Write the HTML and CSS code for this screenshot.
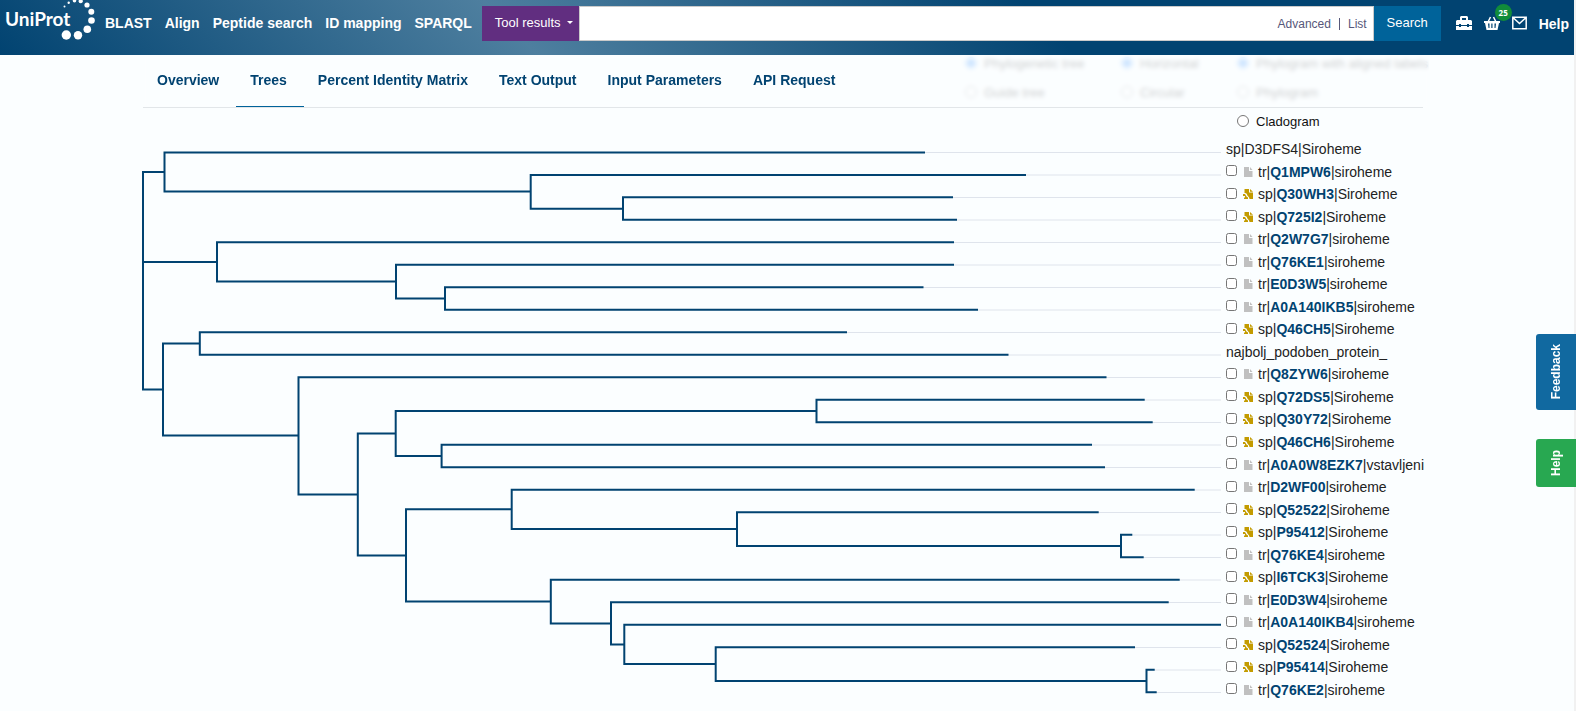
FILE: index.html
```html
<!DOCTYPE html>
<html lang="en">
<head>
<meta charset="utf-8">
<title>Align results | UniProt</title>
<link rel="stylesheet" href="styles.css">
</head>
<body>
<svg class="sprite" aria-hidden="true">
  <symbol id="tr" viewBox="0 0 10 10"><path fill="#c0c0c0" d="M1 0h5v4h3.500v6H1z"/><path fill="#c0c0c0" d="M7 0l2.500 3H7z"/></symbol>
  <symbol id="sp" viewBox="0 0 10 10"><path fill="#c39b00" d="M1.500 0H6v3.500h4V10H6.500C6.500 7.500 4 7 4 5.500 4 4.500 2.500 4 1.500 4z"/><path fill="#c39b00" d="M7 0l3 2.700H7z"/><path fill="#c39b00" d="M0 5h2l1.500 2.500 1.500 1V10H1V8.500h1V7H0z"/></symbol>
</svg>

<header class="header">
  <a class="logo" href="#" aria-label="UniProt home">
    <span class="logo-text">UniProt</span>
    <svg class="logo-dots" width="36" height="42" viewBox="60 0 36 42" fill="#fff" aria-hidden="true"><circle cx="66.300" cy="35" r="4.700"/><circle cx="78" cy="35.300" r="4.200"/><circle cx="87.300" cy="29.200" r="3.800"/><circle cx="91.500" cy="20.500" r="3.300"/><circle cx="91.300" cy="11.800" r="3"/><circle cx="87" cy="5" r="2.600"/><circle cx="80.700" cy="1.200" r="2.100"/><circle cx="74.500" cy=".8" r="1.800"/><circle cx="68.700" cy="2.800" r="1.200"/><circle cx="64.500" cy="6.500" r="1"/></svg>
  </a>
  <nav class="nav">
    <a href="#">BLAST</a><a href="#">Align</a><a href="#">Peptide search</a><a href="#">ID mapping</a><a href="#">SPARQL</a>
  </nav>
  <form class="search">
    <button type="button" class="namespace">Tool results<span class="caret"></span></button>
    <div class="field">
      <input type="text" aria-label="Search UniProt">
      <a href="#">Advanced</a><span class="bar"></span><a href="#">List</a>
    </div>
    <button type="submit" class="submit">Search</button>
  </form>
  <nav class="tools">
    <a href="#" aria-label="Tool results"><svg width="16" height="14" viewBox="0 0 16 14"><path fill="#fff" d="M5 0h6l1 1v3h3l1 1v4h-3V8h-2v1H5V8H3v1H0V5l1-1h3V1zM6 2v2h4V2zM0 10h3v1h2v-1h6v1h2v-1h3v4H0z"/></svg></a>
    <a class="basket" href="#" aria-label="Basket"><svg width="16" height="14" viewBox="0 0 16 14"><path d="M4 6l2.500-5M12 6L9.500 1" stroke="#fff" stroke-width="1.500"/><path fill="#fff" fill-rule="evenodd" d="M0 5h16v2h-1l-1.500 7h-11L1 7H0zM4 7.500l.5 4.500h1V7.500zM7.300 7.500V12h1.200V7.500zM10.500 7.500V12h1l.5-4.500z"/></svg><span class="badge">25</span></a>
    <a href="#" aria-label="Contact"><svg width="15" height="14" viewBox="0 0 15 14"><path fill="none" stroke="#fff" stroke-width="1.500" d="M.8 1.300h13.400v11.400H.8zM1.500 2l6 5.500 6-5.500"/></svg></a>
    <a class="help" href="#">Help</a>
  </nav>
</header>

<nav class="tabs">
  <div class="tab-row">
    <a href="#">Overview</a><a class="active" href="#">Trees</a><a href="#">Percent Identity Matrix</a><a href="#">Text Output</a><a href="#">Input Parameters</a><a href="#">API Request</a>
  </div>
</nav>

<main class="main">
  <div class="options">
    <fieldset><label><input type="radio" name="type" checked>Phylogenetic tree</label><label><input type="radio" name="type">Guide tree</label></fieldset>
    <fieldset><label><input type="radio" name="layout" checked>Horizontal</label><label><input type="radio" name="layout">Circular</label></fieldset>
    <fieldset><label><input type="radio" name="branch" checked>Phylogram with aligned labels</label><label><input type="radio" name="branch">Phylogram</label><label><input type="radio" name="branch">Cladogram</label></fieldset>
  </div>

  <div class="phylo">
    <svg class="tree" viewBox="142 138 1079 563" preserveAspectRatio="none" role="img" aria-label="Phylogenetic tree">
      <path class="guide" d="M924 152.500H1221M1025 175H1221M952 197.500H1221M956 220H1221M953 242.500H1221M953 265H1221M922 287.500H1221M977 310H1221M846 332.500H1221M1007 355H1221M1105 377.500H1221M1144 400H1221M1152 422.500H1221M1091 445H1221M1104 467.500H1221M1194 490H1221M1098 512.500H1221M1131 535H1221M1143 557.500H1221M1179 580H1221M1168 602.500H1221M1134 647.500H1221M1154 670H1221M1156 692.500H1221"/>
      <path class="branch" d="M164.500 172H143V389.500H163M143 262H217
        M924 152.500H164.500V191.500H530.700M1025 175H530.700V208.700H623M952 197.300H623V219.800H956
        M953 242.300H217V281.600H396M953 264.800H396V298.600H445M922.500 287.300H445V309.800H977
        M199.800 343.500H163V435.600H298.500M846 332.300H199.800V354.800H1007.500
        M1105.500 377.300H298.500V494.500H357.800M395.700 433.500H357.800V555.500H406
        M816.500 411H395.700V456H441.600M1143.700 399.800H816.500V422.300H1151.700M1091 444.800H441.600V467.300H1104
        M511.700 509.300H406V601.600H550.800M1193.700 489.800H511.700V529H737M1097.700 512.300H737V546H1121M1131.300 534.800H1121V557.300H1142.700
        M1178.700 579.800H550.800V623.500H611M1167.700 602.300H611V644.600H624.300M1221 624.800H624.300V664H715.700M1134 647.300H715.700V681H1146.500M1153.700 669.800H1146.500V692.300H1155.700"/>
    </svg>
    <ul class="leaves">
      <li>sp|D3DFS4|Siroheme</li>
      <li><input type="checkbox" aria-label="Q1MPW6"><svg><use href="#tr"/></svg><span>tr|<a href="#">Q1MPW6</a>|siroheme</span></li>
      <li><input type="checkbox" aria-label="Q30WH3"><svg><use href="#sp"/></svg><span>sp|<a href="#">Q30WH3</a>|Siroheme</span></li>
      <li><input type="checkbox" aria-label="Q725I2"><svg><use href="#sp"/></svg><span>sp|<a href="#">Q725I2</a>|Siroheme</span></li>
      <li><input type="checkbox" aria-label="Q2W7G7"><svg><use href="#tr"/></svg><span>tr|<a href="#">Q2W7G7</a>|siroheme</span></li>
      <li><input type="checkbox" aria-label="Q76KE1"><svg><use href="#tr"/></svg><span>tr|<a href="#">Q76KE1</a>|siroheme</span></li>
      <li><input type="checkbox" aria-label="E0D3W5"><svg><use href="#tr"/></svg><span>tr|<a href="#">E0D3W5</a>|siroheme</span></li>
      <li><input type="checkbox" aria-label="A0A140IKB5"><svg><use href="#tr"/></svg><span>tr|<a href="#">A0A140IKB5</a>|siroheme</span></li>
      <li><input type="checkbox" aria-label="Q46CH5"><svg><use href="#sp"/></svg><span>sp|<a href="#">Q46CH5</a>|Siroheme</span></li>
      <li>najbolj_podoben_protein_</li>
      <li><input type="checkbox" aria-label="Q8ZYW6"><svg><use href="#tr"/></svg><span>tr|<a href="#">Q8ZYW6</a>|siroheme</span></li>
      <li><input type="checkbox" aria-label="Q72DS5"><svg><use href="#sp"/></svg><span>sp|<a href="#">Q72DS5</a>|Siroheme</span></li>
      <li><input type="checkbox" aria-label="Q30Y72"><svg><use href="#sp"/></svg><span>sp|<a href="#">Q30Y72</a>|Siroheme</span></li>
      <li><input type="checkbox" aria-label="Q46CH6"><svg><use href="#sp"/></svg><span>sp|<a href="#">Q46CH6</a>|Siroheme</span></li>
      <li><input type="checkbox" aria-label="A0A0W8EZK7"><svg><use href="#tr"/></svg><span>tr|<a href="#">A0A0W8EZK7</a>|vstavljeni</span></li>
      <li><input type="checkbox" aria-label="D2WF00"><svg><use href="#tr"/></svg><span>tr|<a href="#">D2WF00</a>|siroheme</span></li>
      <li><input type="checkbox" aria-label="Q52522"><svg><use href="#sp"/></svg><span>sp|<a href="#">Q52522</a>|Siroheme</span></li>
      <li><input type="checkbox" aria-label="P95412"><svg><use href="#sp"/></svg><span>sp|<a href="#">P95412</a>|Siroheme</span></li>
      <li><input type="checkbox" aria-label="Q76KE4"><svg><use href="#tr"/></svg><span>tr|<a href="#">Q76KE4</a>|siroheme</span></li>
      <li><input type="checkbox" aria-label="I6TCK3"><svg><use href="#sp"/></svg><span>sp|<a href="#">I6TCK3</a>|Siroheme</span></li>
      <li><input type="checkbox" aria-label="E0D3W4"><svg><use href="#tr"/></svg><span>tr|<a href="#">E0D3W4</a>|siroheme</span></li>
      <li><input type="checkbox" aria-label="A0A140IKB4"><svg><use href="#tr"/></svg><span>tr|<a href="#">A0A140IKB4</a>|siroheme</span></li>
      <li><input type="checkbox" aria-label="Q52524"><svg><use href="#sp"/></svg><span>sp|<a href="#">Q52524</a>|Siroheme</span></li>
      <li><input type="checkbox" aria-label="P95414"><svg><use href="#sp"/></svg><span>sp|<a href="#">P95414</a>|Siroheme</span></li>
      <li><input type="checkbox" aria-label="Q76KE2"><svg><use href="#tr"/></svg><span>tr|<a href="#">Q76KE2</a>|siroheme</span></li>
    </ul>
  </div>
</main>

<aside class="side">
  <button type="button" class="feedback">Feedback</button>
  <button type="button" class="side-help">Help</button>
</aside>
</body>
</html>
```
FILE: styles.css
```css
* { box-sizing: border-box; }
body {
  margin: 0;
  min-height: 100vh;
  background: #fbfeff;
  color: #222;
  font: 14px "Liberation Sans", Arial, sans-serif;
  border-right: 2px solid #f1f1f1;
}
a { color: inherit; text-decoration: none; }
button { font: inherit; border: 0; padding: 0; }
.sprite { position: absolute; width: 0; height: 0; }

.header {
  display: flex;
  align-items: flex-start;
  height: 55px;
  margin-right: -2px;
  padding-left: 5px;
  color: #fff;
  background: linear-gradient(45deg, #014371 0%, #4e7f9f 33%, #014371 66%);
}
.logo { position: relative; width: 100px; height: 42px; padding-top: 7px; }
.logo-text { font: bold 19px/24px Lato, sans-serif; }
.logo-dots { position: absolute; left: 55px; top: 0; }
.nav { display: flex; gap: 13px; padding: 15px 10px 0 0; font-weight: bold; line-height: 16px; white-space: nowrap; }
.search { display: flex; flex: 1; height: 35px; margin-top: 6px; }
.namespace { display: flex; align-items: center; gap: 6px; width: 97px; padding: 0 0 2px 13px; background: #612e80; color: #fff; font-size: 13px; }
.caret { border: 3px solid transparent; border-top-color: #fff; border-bottom: 0; }
.field { display: flex; flex: 1; align-items: center; padding-right: 6px; background: #fff; border: 1px solid #cacaca; color: #57577a; font-size: 12px; }
.field input { flex: 1; min-width: 0; height: 100%; border: 0; outline: 0; background: none; }
.bar { width: 1px; height: 12px; margin: 0 8px; background: #57577a; }
.submit { width: 67px; padding-bottom: 2px; background: #00639a; color: #fff; font-size: 13px; }
.tools { display: flex; gap: 12px; padding: 16px 7px 0 15px; }
.tools a { display: block; height: 16px; line-height: 16px; }
.tools svg { display: block; }
.basket { position: relative; }
.badge { position: absolute; left: 11px; top: -12px; width: 17px; height: 17px; border-radius: 50%; background: #118c3a; font: bold 8px/17px "Open Sans", sans-serif; text-align: center; }
.tools .help { font-weight: bold; }

.tabs {
  position: absolute;
  z-index: 1;
  top: 55px;
  left: 143px;
  right: 147px;
  background: rgba(251, 254, 255, .8);
  backdrop-filter: blur(2px);
}
.tab-row {
  display: flex;
  height: 53px;
  margin-right: 6px;
  border-bottom: 1px solid #e2e6e9;
  color: #014371;
  font-weight: bold;
}
.tabs a { padding: 17px 17px 0 14px; line-height: 16px; }
.tabs .active { border-bottom: 1px solid #00639a; }

.main { padding: 0 151px 0 142px; }
.options {
  display: grid;
  grid-template-columns: 156px 116px 192px;
  justify-content: end;
  height: 83px;
  margin-right: -6px;
  color: #111;
  font-size: 13px;
}
.options fieldset { min-width: 0; margin: -6px 0 0; padding: 0; border: 0; }
.options label { display: flex; align-items: center; gap: 7px; height: 29px; white-space: nowrap; }
.options input { width: 12px; height: 12px; margin: 0 0 2px; }

.phylo { display: flex; gap: 5px; }
.tree { flex: 1; min-width: 0; height: 563px; }
.tree path { fill: none; vector-effect: non-scaling-stroke; }
.guide { stroke: #dfe4ec; stroke-width: 1; }
.branch { stroke: #014371; stroke-width: 2; stroke-linecap: square; }
.leaves { display: grid; grid-template-rows: repeat(25, 1fr); width: 197px; height: 563px; margin: 0; padding: 0; list-style: none; white-space: nowrap; }
.leaves li { display: flex; align-items: center; }
.leaves input { width: 11px; height: 11px; margin: 0 6px 2px 0; }
.leaves svg { width: 10px; height: 10px; margin-right: 5px; }
.leaves a { color: #014371; font-weight: bold; }

.side { position: fixed; top: 334px; right: 0; display: flex; flex-direction: column; gap: 29px; }
.side button { width: 40px; border-radius: 3px 0 0 3px; color: #fff; font-size: 12px; font-weight: bold; writing-mode: sideways-lr; text-align: center; }
.feedback { height: 76px; background: #1169a0; }
.side-help { height: 48px; background: #28a851; }
```
